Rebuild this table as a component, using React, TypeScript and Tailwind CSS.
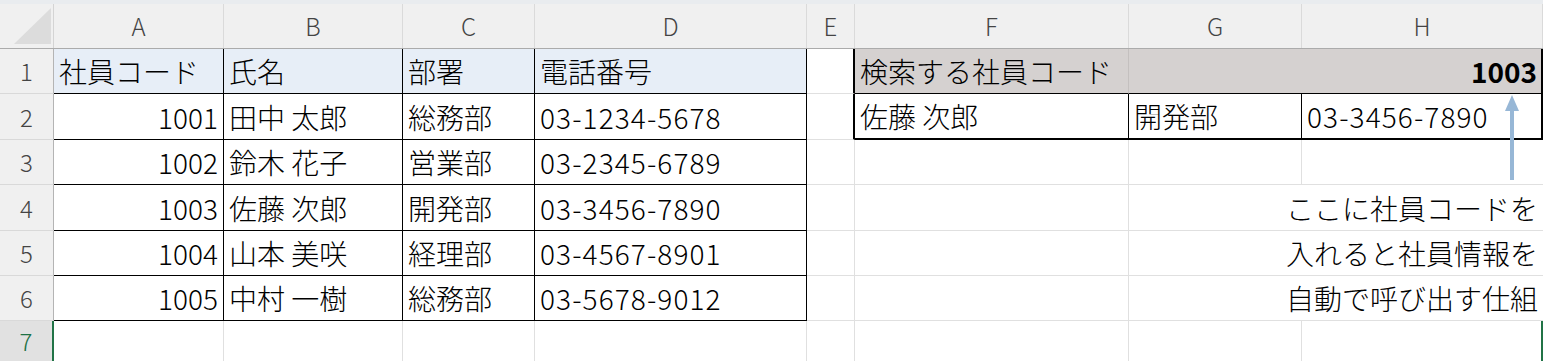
import React from "react";

const F = '"Noto Sans CJK JP", "Noto Sans", sans-serif';

type C = { t?: string; cls?: string; tc?: string };

function Cell({ t, cls = "", tc = "" }: C) {
  return (
    <div className={`relative flex items-center box-border ${cls}`}>
      {t !== undefined && <span className={`whitespace-nowrap ${tc}`}>{t}</span>}
    </div>
  );
}

const heights = [45, 46, 45, 46, 45, 45, 41];

export default function App() {
  const tableRows = [
    ["社員コード", "氏名", "部署", "電話番号"],
    ["1001", "田中 太郎", "総務部", "03-1234-5678"],
    ["1002", "鈴木 花子", "営業部", "03-2345-6789"],
    ["1003", "佐藤 次郎", "開発部", "03-3456-7890"],
    ["1004", "山本 美咲", "経理部", "03-4567-8901"],
    ["1005", "中村 一樹", "総務部", "03-5678-9012"],
  ];
  const notes = ["ここに社員コードを", "入れると社員情報を", "自動で呼び出す仕組"];
  const g = "border-[#e0e0e0]";

  const rows: React.ReactNode[] = [];
  for (let r = 0; r < 7; r++) {
    const cells: React.ReactNode[] = [];
    const sel = r === 6;
    cells.push(
      <Cell
        key="h"
        t={String(r + 1)}
        cls={`justify-center border-b ${sel ? "bg-[#e1e1e1] border-r-2 border-r-[#217346] border-b-[#d4d4d4]" : "bg-[#f0f0f0] border-r border-r-[#b4b4b4] border-b-[#d9d9d9]"}`}
        tc={`text-[24px] ${sel ? "text-[#1e7145]" : "text-[#444]"}`}
      />
    );
    for (let c = 0; c < 4; c++) {
      if (r < 6) {
        const v = tableRows[r][c];
        const right = r > 0 && c === 0;
        cells.push(
          <Cell
            key={"c" + c}
            t={v}
            cls={`border-r border-b border-black px-[5px] ${r === 0 ? "bg-[#e7eef7]" : ""} ${right ? "justify-end" : ""}`}
            tc={r > 0 && c === 3 ? "tracking-[1.1px]" : ""}
          />
        );
      } else {
        cells.push(<Cell key={"c" + c} cls={`border-r border-b ${g}`} />);
      }
    }
    cells.push(
      <Cell key="e" cls={`border-b ${g} ${r < 2 ? "border-r-2 border-r-black" : `border-r ${g}`}`} />
    );
    if (r === 0) {
      cells.push(
        <Cell key="f" t="検索する社員コード" cls="bg-[#d5d1d0] border-b border-b-black border-r border-r-[#c4c0bf] px-[5px]" />
      );
      cells.push(<Cell key="g" cls="bg-[#d5d1d0] border-b border-b-black" />);
      cells.push(
        <Cell
          key="hh"
          t="1003"
          cls="bg-[#d5d1d0] border-b border-b-black border-r-2 border-r-black justify-end pr-[4px]"
          tc="font-bold"
        />
      );
    } else if (r === 1) {
      cells.push(<Cell key="f" t="佐藤 次郎" cls="border-b-2 border-b-black border-r border-r-black px-[5px]" />);
      cells.push(<Cell key="g" t="開発部" cls="border-b-2 border-b-black border-r border-r-black px-[5px]" />);
      cells.push(
        <Cell key="hh" t="03-3456-7890" cls="border-b-2 border-b-black border-r-2 border-r-black px-[5px]" tc="tracking-[1.1px]" />
      );
    } else if (r >= 3 && r <= 5) {
      cells.push(<Cell key="f" cls={`border-r border-b ${g}`} />);
      cells.push(<Cell key="g" cls={`border-b ${g}`} />);
      cells.push(
        <Cell key="hh" t={notes[r - 3]} cls={`border-b ${g} justify-end pr-[5px]`} tc="relative" />
      );
    } else {
      cells.push(<Cell key="f" cls={`border-r border-b ${g}`} />);
      cells.push(<Cell key="g" cls={`border-r border-b ${g}`} />);
      cells.push(
        <Cell key="hh" cls={`border-b ${g} ${sel ? "border-r-2 border-r-[#217346]" : ""}`} />
      );
    }
    rows.push(
      <div
        key={r}
        className="grid grid-cols-[54px_170px_179px_132px_272px_48px_274px_173px_241px]"
        style={{ height: heights[r] }}
      >
        {cells}
      </div>
    );
  }

  const cols = ["A", "B", "C", "D", "E", "F", "G", "H"];

  return (
    <div
      className="relative w-[1543px] h-[361px] overflow-hidden bg-white text-[28px] font-light text-black leading-none"
      style={{ fontFamily: F }}
    >
      <div className="h-[4px] bg-[#e9ecef]" />
      <div className="grid grid-cols-[54px_170px_179px_132px_272px_48px_274px_173px_241px] h-[44px] bg-[#f0f0f0] border-b border-[#ababab] box-content">
        <div className="relative border-r border-[#d4d4d4]">
          <svg className="absolute left-[14px] top-[4px]" width="38" height="37" viewBox="0 0 38 37">
            <polygon points="37,0 37,36 0,36" fill="#dcdcdc" />
          </svg>
        </div>
        {cols.map((c) => (
          <div key={c} className="flex items-center justify-center border-r border-[#dadada] text-[24px] text-[#444]">
            {c}
          </div>
        ))}
      </div>
      {rows}
      <svg className="absolute left-[1500px] top-[94px]" width="24" height="88" viewBox="0 0 24 88">
        <polygon points="12,1 5,17 19,17" fill="#97b7d6" />
        <rect x="10" y="16" width="4" height="70" fill="#97b7d6" />
      </svg>
    </div>
  );
}
